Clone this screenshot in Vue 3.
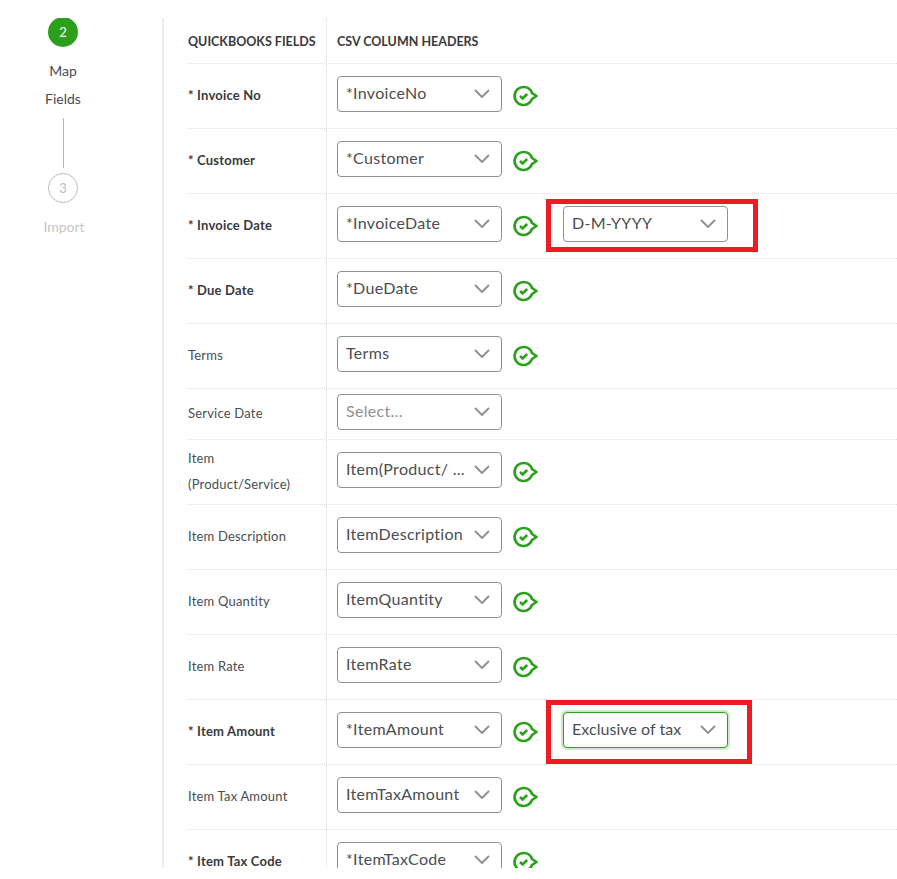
<script setup>
const rows = [
  { label: '* Invoice No', value: '*InvoiceNo', req: true },
  { label: '* Customer', value: '*Customer', req: true },
  { label: '* Invoice Date', value: '*InvoiceDate', req: true, extra: 'D-M-YYYY', box: 'date' },
  { label: '* Due Date', value: '*DueDate', req: true },
  { label: 'Terms', value: 'Terms' },
  { label: 'Service Date', value: 'Select...', placeholder: true, short: true },
  { label: 'Item (Product/Service)', value: 'Item(Product/ ...' },
  { label: 'Item Description', value: 'ItemDescription' },
  { label: 'Item Quantity', value: 'ItemQuantity' },
  { label: 'Item Rate', value: 'ItemRate' },
  { label: '* Item Amount', value: '*ItemAmount', req: true, extra: 'Exclusive of tax', box: 'tax' },
  { label: 'Item Tax Amount', value: 'ItemTaxAmount' },
  { label: '* Item Tax Code', value: '*ItemTaxCode', req: true }
]
</script>

<template>
  <div class="page">
    <div class="frame">
      <aside class="steps">
        <div class="dot active">2</div>
        <div class="step-name">Map<br />Fields</div>
        <div class="connector"></div>
        <div class="dot todo">3</div>
        <div class="step-name muted">Import</div>
      </aside>
      <main class="table">
        <div class="row head">
          <div class="c1">QUICKBOOKS FIELDS</div>
          <div class="c2">CSV COLUMN HEADERS</div>
        </div>
        <div v-for="r in rows" :key="r.label" class="row" :class="{ short: r.short }">
          <div class="c1" :class="{ req: r.req }">{{ r.label }}</div>
          <div class="c2">
            <div class="select" :class="{ placeholder: r.placeholder }">
              <span class="val">{{ r.value }}</span>
              <svg class="chev" width="16" height="9" viewBox="0 0 16 9"><path d="M1 1l7 7 7-7" fill="none" stroke="#8d9096" stroke-width="1.9" /></svg>
            </div>
            <svg v-if="!r.placeholder" class="ok" width="26" height="22" viewBox="0 0 26 22">
              <path d="M10.5 2A9 9 0 0 1 19 8L23.5 11 19 14A9 9 0 1 1 10.5 2z" fill="none" stroke="#2ca01c" stroke-width="2.7" stroke-linejoin="round" />
              <path d="M7 11l2.6 2.4 4.6-4.4" fill="none" stroke="#2ca01c" stroke-width="2.6" />
            </svg>
            <div v-if="r.extra" class="redbox" :class="r.box">
              <div class="select" :class="{ focus: r.box === 'tax' }">
                <span class="val">{{ r.extra }}</span>
                <svg class="chev" width="16" height="9" viewBox="0 0 16 9"><path d="M1 1l7 7 7-7" fill="none" stroke="#8d9096" stroke-width="1.9" /></svg>
              </div>
            </div>
          </div>
        </div>
      </main>
    </div>
  </div>
</template>

<style>
html, body { margin: 0; background: #fff; }
</style>

<style scoped>
.page {
  width: 897px;
  height: 879px;
  overflow: hidden;
  background: #fff;
  font-family: Lato, "Noto Sans", sans-serif;
  color: #393a3d;
}
.frame {
  display: flex;
  height: 850px;
  padding-top: 18px;
  overflow: hidden;
}
.steps {
  width: 126px;
  flex: none;
  display: flex;
  flex-direction: column;
  align-items: center;
  height: 850px;
  overflow: hidden;
}
.dot {
  width: 30px;
  height: 30px;
  border-radius: 50%;
  box-sizing: border-box;
  display: flex;
  align-items: center;
  justify-content: center;
  font-size: 13px;
  flex: none;
}
.active {
  background: #2ca01c;
  color: #fff;
  margin-top: -1px;
}
.todo {
  border: 1px solid #babec5;
  color: #babec5;
  margin-top: 5px;
}
.step-name {
  font-size: 14px;
  line-height: 28px;
  text-align: center;
  margin-top: 10px;
  color: #4a4d52;
}
.muted {
  color: #c9c6c4;
  margin-top: 10px;
  margin-left: 2px;
}
.connector {
  width: 1px;
  height: 50px;
  background: #b5b7ba;
  margin-top: 5px;
}
.table {
  flex: 1;
  min-width: 0;
  margin-left: 36px;
  padding-left: 24px;
  border-left: 2px solid #ececee;
  height: 850px;
  overflow: hidden;
}
.row {
  display: flex;
  height: 65px;
  box-sizing: border-box;
  border-bottom: 1px dotted #dcdde0;
}
.row.short { height: 51px; }
.row.head { height: 46px; }
.c1 {
  width: 138px;
  flex: none;
  box-sizing: border-box;
  padding-right: 20px;
  padding-bottom: 2px;
  display: flex;
  align-items: center;
  font-size: 13px;
  line-height: 26px;
  letter-spacing: 0.2px;
  color: #4a4d52;
}
.req { font-weight: 700; color: #393a3d; }
.c2 {
  flex: 1;
  min-width: 0;
  display: flex;
  align-items: center;
  padding-left: 10px;
  border-left: 1px dotted #dcdde0;
}
.head .c1, .head .c2 {
  font-size: 12.5px;
  font-weight: 700;
  color: #393a3d;
  letter-spacing: 0;
  white-space: nowrap;
  padding-right: 0;
  padding-bottom: 0;
  padding-top: 2px;
}
.select {
  width: 165px;
  height: 36px;
  flex: none;
  box-sizing: border-box;
  border: 1px solid #8d9096;
  border-radius: 4px;
  padding: 0 11px 3px 8px;
  margin-bottom: 5px;
  display: flex;
  align-items: center;
  justify-content: space-between;
  font-size: 16px;
  letter-spacing: 0.3px;
  color: #4a4d52;
  background: #fff;
  white-space: nowrap;
}
.val { overflow: hidden; }
.chev { flex: none; margin-left: 3px; margin-top: 2px; }
.placeholder { color: #8d9096; }
.focus {
  border-color: #2ca01c;
  box-shadow: 0 0 0 2px #cfe8cb;
  margin-bottom: 0;
  letter-spacing: 0.05px;
}
.ok { flex: none; margin-left: 11px; }
.redbox {
  flex: none;
  box-sizing: border-box;
  border: 5px solid #ed1c24;
  margin-left: 7px;
  display: flex;
  padding-left: 12px;
}
.redbox.date {
  width: 212px;
  height: 53px;
  margin-top: -2px;
  padding-top: 2px;
}
.redbox.tax {
  width: 206px;
  height: 64px;
  padding-top: 7px;
}
</style>
